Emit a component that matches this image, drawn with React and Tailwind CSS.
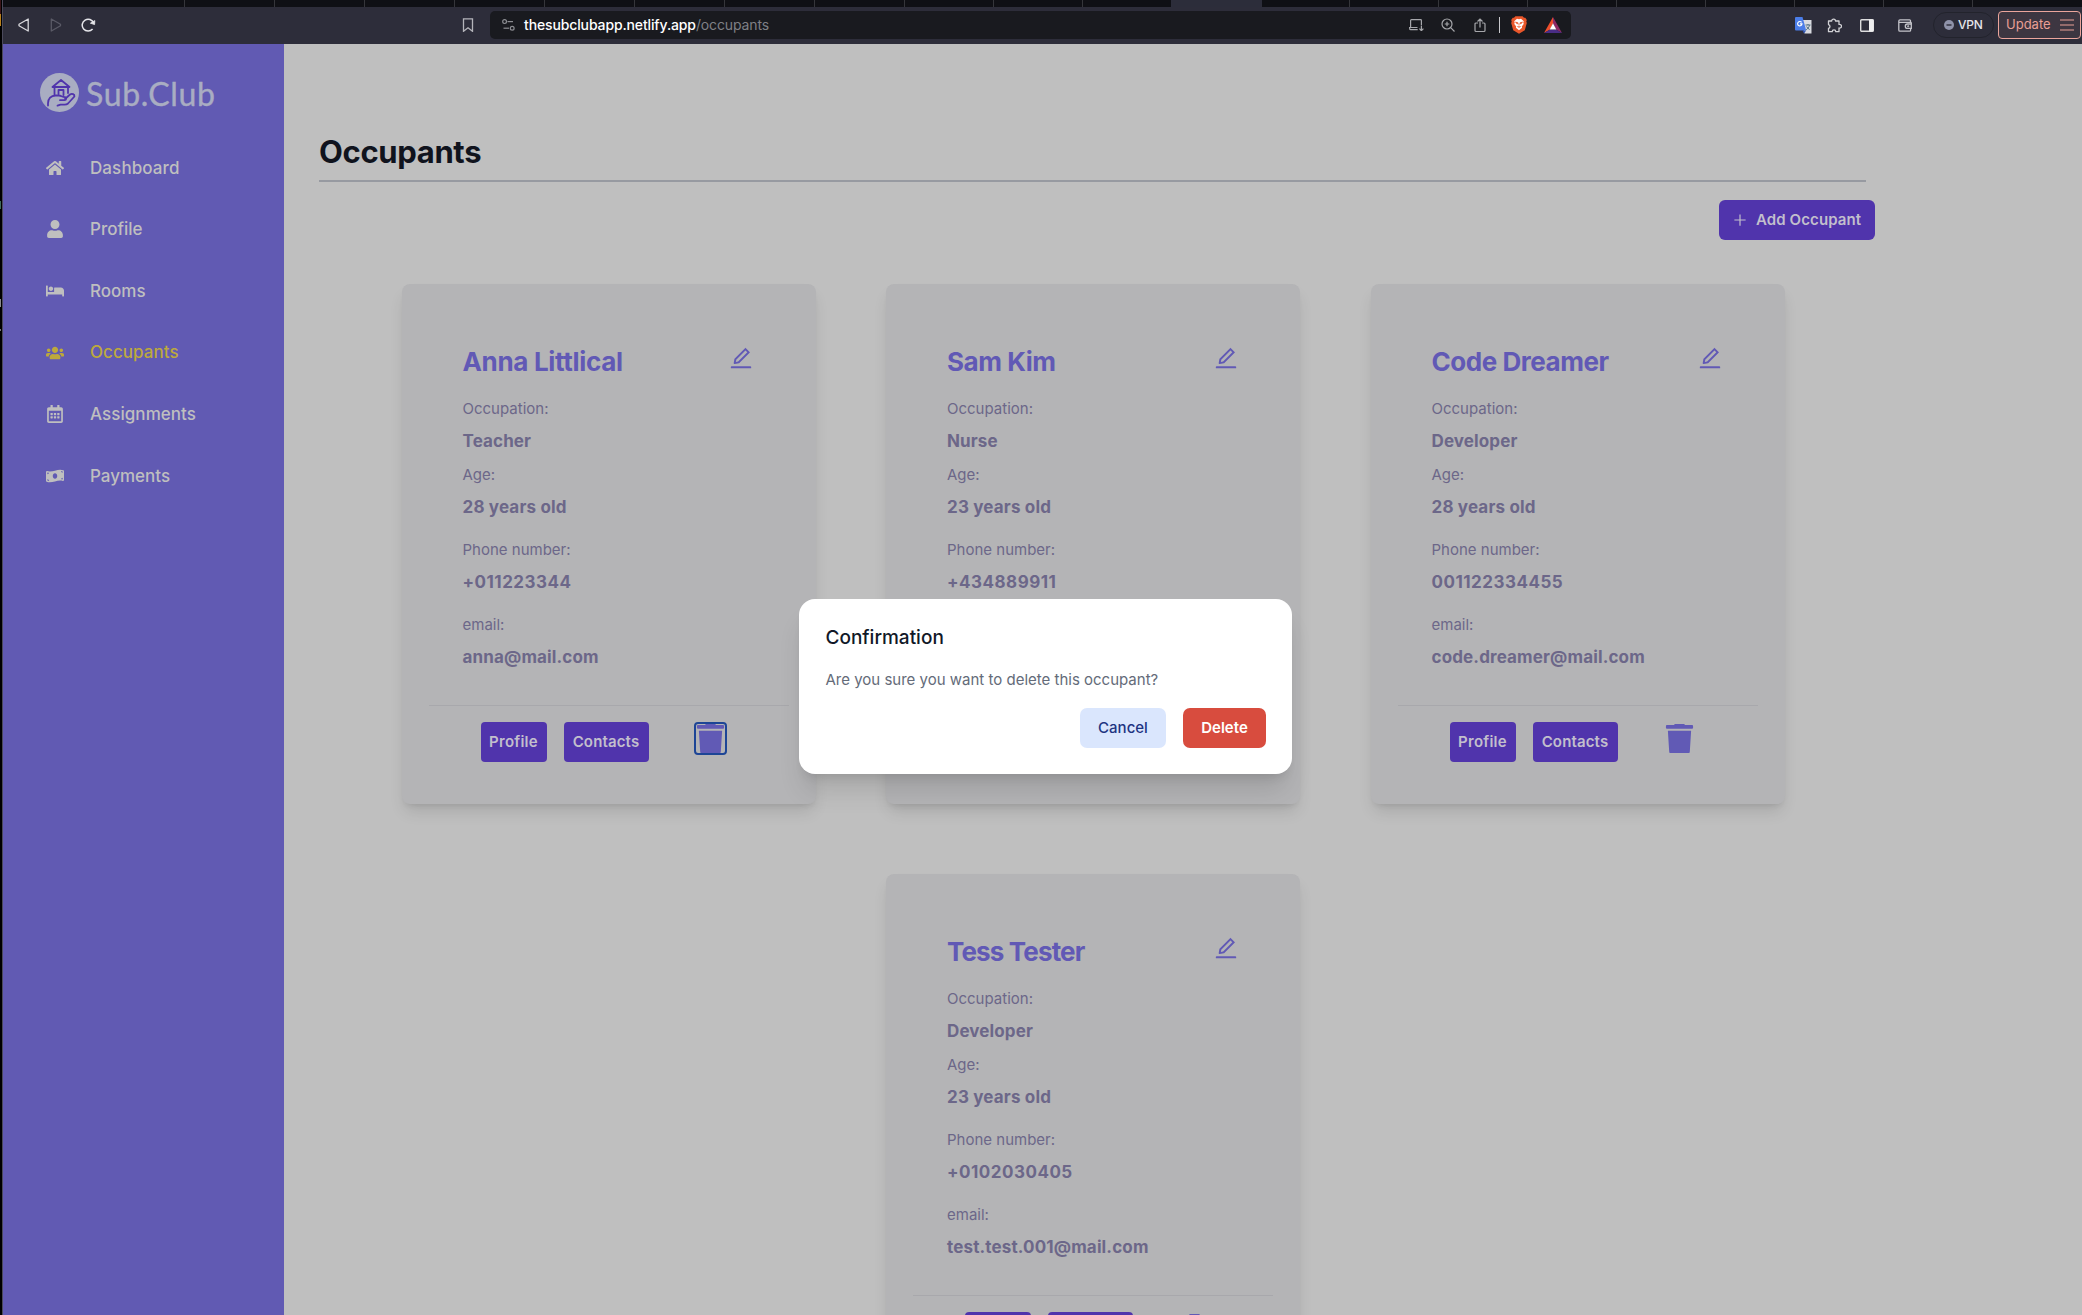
import React from "react";
import {
  FaHome,
  FaUser,
  FaBed,
  FaUsers,
  FaRegCalendarAlt,
  FaMoneyBillWave,
  FaTrash,
} from "react-icons/fa";
import { AiOutlineEdit, AiOutlinePlus } from "react-icons/ai";

const TABS_LEFT = 8;
const TABS_TOTAL = 20;

function TabStrip() {
  return (
    <div className="flex h-[7px] shrink-0 bg-[#0f1015]">
      <div className="w-[182px] shrink-0 border-r border-[#35363b]" />
      {Array.from({ length: TABS_TOTAL }, (_, i) => {
        const active = i === 11;
        const width = i < TABS_LEFT || active ? "w-[90px]" : i === 12 ? "w-[88px]" : "w-[89px]";
        const look = active
          ? "bg-[#2c2d3a] border-[#2c2d3a]"
          : i === 10
            ? "border-[#2c2d3a]"
            : "border-[#35363b]";
        return <div key={i} className={`${width} ${look} shrink-0 border-r`} />;
      })}
    </div>
  );
}

function BraveIcon() {
  return (
    <svg viewBox="0 0 16 18" className="ml-[11px] h-[18px] w-4">
      <path d="M4.400.3h7.200l1.400 1.500 1.300-.1L15.800 4l-.5 1.400.5 1.700-2 7.200L8 17.800l-5.800-3.500-2-7.200.5-1.700L.2 4l1.500-2.300 1.300.1z" fill="#e8562a" />
      <path d="M8 3.300l2-.5 2.800 2.400-.5 1 .4 1.800-1.900 2.600.3 1.100L8 14.300l-3.100-2.600.3-1.100L3.300 8l.4-1.800-.5-1L6 2.800z" fill="#fff" />
      <path d="M4.500 6.200l2.300.5-.5 1.200zM11.500 6.200l-2.300.5.5 1.200zM8 7v2.500M6.300 10.500L8 11.300l1.700-.8" stroke="#e8562a" strokeWidth=".8" fill="#e8562a" />
    </svg>
  );
}

function RewardsIcon() {
  return (
    <svg viewBox="0 0 18 16" className="ml-[17px] h-4 w-[18px]">
      <path d="M9 0L0 16l6-3.500 3-6z" fill="#ee4f2c" />
      <path d="M9 0l9 16-6-3.500-3-6z" fill="#8e2a66" />
      <path d="M0 16h18l-6-3.600H6z" fill="#4a2d86" />
      <path d="M9 6.200l3.300 6.300H5.700z" fill="#fff" />
    </svg>
  );
}

function TranslateIcon() {
  return (
    <svg viewBox="0 0 17 17" className="h-[17px] w-[17px]">
      <path d="M6 3h10.500v13.500H9.500z" fill="#d9dbe0" />
      <path d="M10.500 8h5M13 7v1M14.500 8.200c-.4 2-1.800 3.600-3.300 4.500M11.600 9.500c.6 1.200 1.600 2.300 3 3" stroke="#4f6f80" strokeWidth="1" fill="none" />
      <path d="M1 0h6.500l3.700 13.500H1a1 1 0 0 1-1-1V1a1 1 0 0 1 1-1z" fill="#4a7de8" />
      <path d="M7.500 13.500h3.700L9 16.500z" fill="#3157b5" />
      <path d="M6.600 5.400A2.200 2.200 0 1 0 7 6.900H5" stroke="#fff" strokeWidth="1.100" fill="none" />
    </svg>
  );
}

function Toolbar() {
  return (
    <div className="flex h-[37px] shrink-0 items-center bg-[#2d2d3a] pb-px text-[#c4c4ca]">
      <svg viewBox="0 0 12 14" className="ml-[15px] h-[14px] w-3" fill="none" stroke="#d8d8dc" strokeWidth="1.300" strokeLinejoin="round">
        <path d="M10.200 1v12L1 7.800V6.200z" />
      </svg>
      <svg viewBox="0 0 12 14" className="ml-5 h-[14px] w-3" fill="none" stroke="#5a5a66" strokeWidth="1.300" strokeLinejoin="round">
        <path d="M1.300 1v12l9.200-5.200V6.200z" />
      </svg>
      <svg viewBox="0 0 15 14" className="ml-[19px] h-[14px] w-[15px]" fill="none" stroke="#e6e6ea" strokeWidth="1.500">
        <path d="M11.600 11A5.900 5.900 0 1 1 12.600 5" />
        <path d="M9.400 5.200L13.800 2.600l-.2 4z" fill="#e6e6ea" strokeWidth=".8" />
      </svg>
      <svg viewBox="0 0 12 14" className="ml-[366px] h-[14px] w-3" fill="none" stroke="#b4b4ba" strokeWidth="1.300">
        <path d="M1.500.8h9v12.500L6 9.800l-4.500 3.500z" />
      </svg>
      <div className="ml-[16px] flex h-7 w-[1081px] items-center rounded-[5px] bg-[#191a1f]">
        <svg viewBox="0 0 13 12" className="ml-3 h-3 w-[13px]" fill="none" stroke="#8c8d92" strokeWidth="1.200">
          <circle cx="2.600" cy="2.600" r="1.900" />
          <path d="M5.500 2.600H11" />
          <circle cx="10.200" cy="9.200" r="1.900" />
          <path d="M1.500 9.200H7" />
        </svg>
        <span className="ml-[9px] whitespace-nowrap text-[14px] leading-7 tracking-[-0.13px] text-[#7f8086]">
          <span className="font-medium text-white">thesubclubapp.netlify.app</span>/occupants
        </span>
        <div className="flex-1" />
        <svg viewBox="0 0 15 12" className="h-3 w-[15px]" fill="none" stroke="#a6a7ab" strokeWidth="1.200">
          <path d="M1.600 8.300V1.500a.8.800 0 0 1 .8-.8h9.200a.8.800 0 0 1 .8.800v4.500M0 8.500h8.500M.7 8.500v1.200a1 1 0 0 0 1 1h7" />
          <path d="M12.400 6.500v5M10.400 9.700l2 2 2-2" />
        </svg>
        <svg viewBox="0 0 14 14" className="ml-[17px] h-[14px] w-[14px]" fill="none" stroke="#a6a7ab" strokeWidth="1.200">
          <circle cx="6" cy="6" r="5" />
          <path d="M9.700 9.700l3.800 3.800M6 3.700v4.600M3.700 6h4.600" />
        </svg>
        <svg viewBox="0 0 12 15" className="ml-[19px] h-[15px] w-3" fill="none" stroke="#a6a7ab" strokeWidth="1.200">
          <path d="M4 5H2a1 1 0 0 0-1 1v6.500a1 1 0 0 0 1 1h8a1 1 0 0 0 1-1V6a1 1 0 0 0-1-1H8M6 9.500V1.200M3.500 3.500L6 1l2.500 2.500" />
        </svg>
        <div className="ml-[13px] h-4 w-px bg-[#c8c8cc]" />
        <BraveIcon />
        <RewardsIcon />
        <div className="w-[9px]" />
      </div>
      <div className="w-[224px] shrink-0" />
      <TranslateIcon />
      <svg viewBox="0 0 15 15" className="ml-[15px] h-[15px] w-[15px]" fill="none" stroke="#d2d2d6" strokeWidth="1.300" strokeLinejoin="round">
        <path d="M1.500 3h3.200a1.900 1.900 0 1 1 3.800 0H12v3.400a1.900 1.900 0 1 1 0 3.600v3.700H8.800a1.800 1.800 0 0 0-3.600 0H1.500v-3.400a1.900 1.900 0 0 0 0-3.700z" />
      </svg>
      <svg viewBox="0 0 14 13" className="ml-[18px] h-[13px] w-[14px]">
        <rect x=".7" y=".7" width="12.600" height="11.600" rx="1" fill="none" stroke="#dededf" strokeWidth="1.400" />
        <path d="M9 .5h4.500v12H9z" fill="#eeeeef" />
      </svg>
      <svg viewBox="0 0 14 13" className="ml-6 h-[13px] w-[14px]" fill="none" stroke="#c4c4ca" strokeWidth="1.300">
        <path d="M12.500 3.300V1.700a.9.900 0 0 0-.9-.9H2A1.300 1.300 0 0 0 .8 2v9a1.200 1.200 0 0 0 1.200 1.200h9.600a1 1 0 0 0 1-1V10M.8 3.300h11.800a.7.700 0 0 1 .7.700v1" />
        <path d="M13.300 5H9.500a2.200 2.200 0 0 0 0 4.400h3.800z" />
        <circle cx="10.200" cy="7.200" r=".4" fill="#c4c4ca" />
      </svg>
      <div className="ml-[21px] flex h-[26px] w-[61px] items-center rounded-full border border-[#22232c]">
        <svg viewBox="0 0 10 10" className="ml-[10px] h-[10px] w-[10px]">
          <circle cx="5" cy="5" r="5" fill="#8f93aa" />
          <path d="M2.500 5h5" stroke="#2d2d3a" strokeWidth="1.400" />
        </svg>
        <span className="ml-1 text-[12px] font-medium tracking-[-0.2px] text-[#e6e6ea]">VPN</span>
      </div>
      <div className="ml-1 flex h-7 w-[83px] shrink-0 items-center rounded-[4px] border border-[#eba59c] bg-[#3d3641]">
        <span className="ml-[7px] text-[13px] text-[#e99f95]">Update</span>
        <svg viewBox="0 0 14 12" className="ml-[9px] h-3 w-[14px]" stroke="#e99f95" strokeWidth="1.200">
          <path d="M0 1h14M0 6h14M0 11h14" />
        </svg>
      </div>
    </div>
  );
}

function Logo() {
  return (
    <div className="flex h-[39px] items-center pl-[37px]">
      <svg viewBox="0 0 39 39" className="h-[39px] w-[39px]" fill="none" stroke="#5034ac" strokeWidth="1.800" strokeLinecap="round" strokeLinejoin="round">
        <circle cx="19.500" cy="19.500" r="19.500" fill="#a9adc2" stroke="none" />
        <path d="M12.500 14L21 7l8.500 7z" />
        <path d="M14.500 14v7.500M28 14v6M18.500 21v-4h5v5" />
        <path d="M8 32.500v-2.300c0-4.300 3-7.700 7.500-7.700h3.500c2 0 3.400 1.600 6 1.600 1.600 0 1.600 3.100-.5 3.100h-4.500" />
        <path d="M25 26l5-4.500c2-1.500 4.800-.2 4.400 2L28 30.500c-1 1-2 1.200-3.500 1.200h-4l-3 1" />
      </svg>
      <span className="ml-[7px] whitespace-nowrap pt-0.5 font-[Lato] text-[32px] leading-[39px] tracking-[0.66px] text-[#a9adc2] [-webkit-text-stroke:0.4px_#a9adc2]">
        Sub.Club
      </span>
    </div>
  );
}

const NAV = [
  { label: "Dashboard", Icon: FaHome, spacing: "tracking-[0.1px]" },
  { label: "Profile", Icon: FaUser, spacing: "tracking-normal" },
  { label: "Rooms", Icon: FaBed, spacing: "tracking-normal" },
  { label: "Occupants", Icon: FaUsers, spacing: "tracking-[0.05px]", active: true },
  { label: "Assignments", Icon: FaRegCalendarAlt, spacing: "tracking-[0.05px]" },
  { label: "Payments", Icon: FaMoneyBillWave, spacing: "tracking-normal" },
];

function Sidebar() {
  return (
    <aside className="w-[281px] shrink-0 bg-[#615ab3] pt-[29px]">
      <Logo />
      <nav className="mt-[25px]">
        {NAV.map(({ label, Icon, spacing, active }) => (
          <div
            key={label}
            className={`flex h-[61.6px] items-center pl-[43px] text-[17px] font-medium ${active ? "text-[#bda93c]" : "text-[#bfbfbf]"}`}
          >
            <Icon className="h-[18px] w-[18px]" />
            <span className={`ml-[26px] pt-px ${spacing}`}>{label}</span>
          </div>
        ))}
      </nav>
    </aside>
  );
}

const OCCUPANTS = [
  { name: "Anna Littlical", nameSpacing: "tracking-[-0.32px]", occupation: "Teacher", age: 28, phone: "+011223344", email: "anna@mail.com", focused: true },
  { name: "Sam Kim", nameSpacing: "tracking-[-0.45px]", occupation: "Nurse", age: 23, phone: "+434889911", email: "", covered: true },
  { name: "Code Dreamer", nameSpacing: "tracking-[-0.45px]", occupation: "Developer", age: 28, phone: "001122334455", email: "code.dreamer@mail.com" },
  { name: "Tess Tester", nameSpacing: "tracking-[-0.85px]", occupation: "Developer", age: 23, phone: "+0102030405", email: "test.test.001@mail.com" },
];

function Field({ label, value, spacing = "tracking-[0.12px]" }) {
  return (
    <div className="text-[#6c6789]">
      <div className="h-8 text-[15px] leading-8">{label}</div>
      <div className={`h-8 text-[17px] font-bold leading-8 ${spacing}`}>{value}</div>
    </div>
  );
}

function OccupantCard({ person }) {
  const lower = person.covered ? "invisible" : "";
  return (
    <article className="h-[520px] w-[414px] shrink-0 rounded-lg bg-[#b4b4b6] px-[27px] pt-[60px] shadow-[0_10px_16px_-3px_rgba(0,0,0,0.12),0_4px_6px_-4px_rgba(0,0,0,0.12)]">
      <div className="flex h-9 justify-between pl-[34px] pr-[34.500px]">
        <h2 className={`whitespace-nowrap text-[26px] font-bold leading-9 text-[#6159b5] ${person.nameSpacing}`}>{person.name}</h2>
        <AiOutlineEdit className="mt-px h-[26px] w-[26px] text-[#6159b5]" />
      </div>
      <div className="mt-[13px] pl-[34px]">
        <Field label="Occupation:" value={person.occupation} />
        <div className="h-0.5" />
        <Field label="Age:" value={`${person.age} years old`} spacing="tracking-[0.17px]" />
        <div className="h-[11px]" />
        <Field label="Phone number:" value={person.phone} spacing="tracking-[0.5px]" />
        <div className={`pt-[11px] ${lower}`}>
          <Field label="email:" value={person.email} spacing="tracking-[0.14px]" />
        </div>
      </div>
      <div className={lower}>
        <div className="mt-8 h-px bg-[#a8a8ac]" />
        <div className="mt-4 flex pl-[52px] text-[15px] font-semibold text-[#c2bfcc]">
          <button className="h-10 w-[66px] rounded bg-[#5034ac] pt-px tracking-[0.25px]">Profile</button>
          <button className="ml-[17px] h-10 w-[85px] rounded bg-[#5034ac] pt-px tracking-[0.15px]">Contacts</button>
          <div
            className={`ml-[45px] flex h-[33px] w-[33px] items-center justify-center overflow-hidden rounded-[4px] border-2 ${person.focused ? "border-[#1d4596]" : "border-transparent"}`}
          >
            <FaTrash className="h-[31px] w-[31px] shrink-0 text-[#615ab5]" />
          </div>
        </div>
      </div>
    </article>
  );
}

function ConfirmDialog() {
  return (
    <div className="absolute inset-0 pl-[799px] pt-[599px]">
      <div className="h-[175px] w-[493px] rounded-2xl bg-white px-[26px] pt-[26px] shadow-[0_21px_27px_-5px_rgba(0,0,0,0.12),0_8px_11px_-6px_rgba(0,0,0,0.12)]">
        <h3 className="h-[26px] pl-[0.500px] text-[19px] font-medium leading-[26px] text-[#111827]">Confirmation</h3>
        <p className="mt-[17px] h-6 whitespace-nowrap pl-[0.500px] text-[15px] leading-6 text-[#646b79]">
          Are you sure you want to delete this occupant?
        </p>
        <div className="mt-4 flex justify-end gap-[17px] text-[15px]">
          <button className="h-10 w-[86px] rounded-[7px] bg-[#dae6fd] pt-px font-medium text-[#1e3482]">Cancel</button>
          <button className="h-10 w-[83px] rounded-[7px] bg-[#d84c3e] pt-px font-semibold text-white">Delete</button>
        </div>
      </div>
    </div>
  );
}

function WindowEdge() {
  return (
    <div className="w-[3px] shrink-0 border-r border-[#4b4a5c] bg-black">
      <div className="h-[14px] w-px bg-[#3a1418]" />
      <div className="h-3 w-px bg-[#b8801c]" />
      <div className="mt-[175px] h-2 w-px bg-[#3f6a5c]" />
      <div className="mt-[90px] h-2 w-px bg-[#8a8a8e]" />
      <div className="mt-[22px] h-0.5 w-px bg-[#77777b]" />
    </div>
  );
}

export default function App() {
  return (
    <div className="relative flex h-[1315px] w-[2082px] overflow-hidden bg-[#bfbfbf] font-[Inter,sans-serif]">
      <WindowEdge />
      <div className="flex min-w-0 flex-1 flex-col">
        <TabStrip />
        <Toolbar />
        <div className="flex min-h-0 flex-1">
          <Sidebar />
          <main className="flex-1 overflow-hidden pl-[35px] pt-[90px]">
            <h1 className="h-9 text-[31px] font-bold leading-9 tracking-[-0.35px] text-[#10131d]">Occupants</h1>
            <div className="mt-[10px] h-0.5 w-[1547px] bg-[#979aa1]" />
            <div className="mt-[18px] flex w-[1556px] justify-end">
              <button className="flex h-10 w-[156px] items-center rounded-md bg-[#5034ac] text-[#c2bfcc]">
                <AiOutlinePlus className="ml-[13px] h-4 w-4" />
                <span className="ml-2 whitespace-nowrap pt-px text-[15px] font-semibold tracking-[0.1px]">Add Occupant</span>
              </button>
            </div>
            <div className="ml-[82px] mt-11 flex w-[1384px] flex-wrap justify-center gap-x-[70.5px] gap-y-[70px]">
              {OCCUPANTS.map((person) => (
                <OccupantCard key={person.name} person={person} />
              ))}
            </div>
          </main>
        </div>
      </div>
      <ConfirmDialog />
    </div>
  );
}
